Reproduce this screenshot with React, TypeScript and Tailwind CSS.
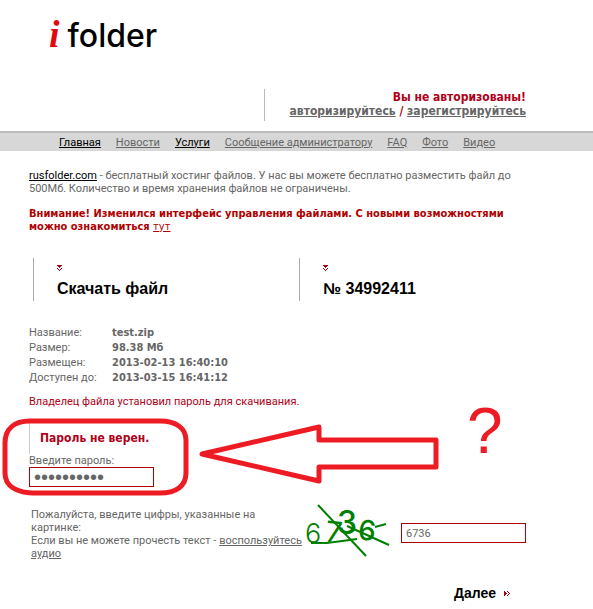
import { ReactNode } from "react";
import clsx from "clsx";

const navItems = [
  { title: "Главная", active: true },
  { title: "Новости" },
  { title: "Услуги", active: true },
  { title: "Сообщение администратору" },
  { title: "FAQ" },
  { title: "Фото" },
  { title: "Видео" },
];

const fileInfo = [
  ["Название:", "test.zip"],
  ["Размер:", "98.38 Мб"],
  ["Размещен:", "2013-02-13 16:40:10"],
  ["Доступен до:", "2013-03-15 16:41:12"],
];

const inputClass =
  "h-5 w-[125px] border border-[#b00000] bg-white px-1 text-[#666666] outline-none";

const boldFont = "font-['DejaVu_Sans_Condensed',sans-serif] font-bold";

function Logo() {
  return (
    <a href="#" aria-label="ifolder" className="flex items-baseline">
      <span className="font-['Liberation_Serif',serif] text-[38px] leading-[44px] font-bold text-[#e00a10] italic">
        i
      </span>
      <span className="ml-2 font-['Inter',sans-serif] text-[32px] leading-[44px] font-medium text-black">
        folder
      </span>
    </a>
  );
}

function DownMark() {
  return (
    <svg width="5" height="6" viewBox="0 0 5 6" fill="#b00018" shapeRendering="crispEdges">
      <path d="M0 0h5v1H0zM1 1h3v1H1zM2 2h1v1H2zM0 3h1v1H0zM4 3h1v1H4zM1 4h1v1H1zM3 4h1v1H3zM2 5h1v1H2z" />
    </svg>
  );
}

function NextMark() {
  return (
    <svg width="6" height="5" viewBox="0 0 6 5" fill="#b00018" shapeRendering="crispEdges">
      <path d="M0 0h1v5H0zM1 1h1v3H1zM2 2h1v1H2zM3 0h1v1H3zM3 4h1v1H3zM4 1h1v1H4zM4 3h1v1H4zM5 2h1v1H5z" />
    </svg>
  );
}

function Heading({ children }: { children: ReactNode }) {
  return (
    <div className="h-[43px] border-l border-[#aaaaaa] pt-[7px] pl-[23px]">
      <DownMark />
      <h2 className="mt-2 font-['Liberation_Sans',sans-serif] text-base leading-5 font-bold text-black">
        {children}
      </h2>
    </div>
  );
}

function Captcha() {
  return (
    <svg width="86" height="54" viewBox="0 0 86 54" overflow="visible" role="img" aria-label="6736">
      <g fill="#008000" fontFamily="Inter, sans-serif">
        <text x="0" y="36" fontSize="27" fontWeight="300">6</text>
        <text x="20" y="36" fontSize="30" fontWeight="400" transform="rotate(6 28 28)">7</text>
        <text x="32" y="27" fontSize="32" fontWeight="500">3</text>
        <text x="53" y="33" fontSize="28" fontWeight="500" transform="rotate(6 61 26)">6</text>
      </g>
      <g stroke="#008000" strokeWidth="2" fill="none">
        <path d="M13 -2L61 49" />
        <path d="M42 19L84 38" />
        <path d="M6 36H22L52 32" />
        <path d="M70 20L81 17" />
      </g>
    </svg>
  );
}

export default function App() {
  return (
    <div className="relative bg-white pb-2 font-['Roboto',sans-serif] text-[11px] leading-[13px] text-[#666666]">
      <header className="pr-[67px] pl-[49px]">
        <div className="h-[89px] pt-3">
          <Logo />
        </div>
        <div className="flex justify-end">
          <div className={clsx(boldFont, "mb-[10px] h-8 w-[262px] border-l border-[#bbbbbb] text-right text-xs leading-[14px] whitespace-nowrap text-[#b00018]")}>
            <p className="pt-px">Вы не авторизованы!</p>
            <p>
              <a href="#" className="text-[#666666] underline">авторизируйтесь</a>
              {" / "}
              <a href="#" className="text-[#666666] underline">зарегистрируйтесь</a>
            </p>
          </div>
        </div>
      </header>

      <nav className="flex h-5 items-center gap-[15px] border-t-2 border-[#bbbbbb] bg-[#d7d7d7] pl-[59px] whitespace-nowrap">
        {navItems.map((item) => (
          <a
            key={item.title}
            href="#"
            className={clsx("underline", item.active && "text-black")}
          >
            {item.title}
          </a>
        ))}
      </nav>

      <main className="pt-[18px] pr-[67px] pl-[29px]">
        <p>
          <a href="#" className="text-black underline">rusfolder.com</a> - бесплатный
          хостинг файлов. У нас вы можете бесплатно разместить файл до 500Мб.
          Количество и время хранения файлов не ограничены.
        </p>
        <p className={clsx(boldFont, "mt-3 text-[#b00000]")}>
          Внимание! Изменился интерфейс управления файлами. С новыми возможностями
          можно ознакомиться{" "}
          <a href="#" className="font-normal underline">тут</a>
        </p>

        <div className="mt-[25px] grid grid-cols-[54%_1fr] pl-1">
          <Heading>Скачать файл</Heading>
          <Heading>№ 34992411</Heading>
        </div>

        <table className="mt-6 text-left leading-[15px]">
          <tbody>
            {fileInfo.map(([label, value]) => (
              <tr key={label}>
                <th className="w-[83px] font-normal">{label}</th>
                <td className={boldFont}>{value}</td>
              </tr>
            ))}
          </tbody>
        </table>
        <p className="mt-[10px] text-[#b00018]">
          Владелец файла установил пароль для скачивания.
        </p>

        <form onSubmit={(e) => e.preventDefault()}>
          <div className="relative mt-[14px]">
            <p className={clsx(boldFont, "h-8 border-l border-[#cccccc] pt-2 pl-[10px] text-xs leading-4 text-[#b00018]")}>
              Пароль не верен.
            </p>
            <label htmlFor="password" className="block">
              Введите пароль:
            </label>
            <input
              id="password"
              type="password"
              defaultValue="1234567890"
              className={clsx(inputClass, "block font-['Liberation_Sans',sans-serif] text-xl")}
            />

            {/* marker notes over the form */}
            <svg
              width="520"
              height="110"
              viewBox="0 -10 520 110"
              className="pointer-events-none absolute top-[-30px] left-[-29px]"
              fill="none"
              stroke="#ed1c24"
              strokeWidth="5"
              strokeLinejoin="round"
            >
              <path d="M30 19H160C177 19 186 27 186 38V71C186 84 176 91 160 91H36C16 91 5 84 5 71V41C5 27 14 19 30 19Z" />
              <path d="M202 52L319 25V38H436V65H319V79Z" />
              <text x="467" y="51" fontSize="64" fill="#ed1c24" stroke="none" fontFamily="Liberation Sans, sans-serif">?</text>
            </svg>
          </div>

          <div className="mt-5 flex items-start pl-[2px]">
            <label htmlFor="digits" className="w-[274px] pt-px">
              Пожалуйста, введите цифры, указанные на картинке:
              <br />
              Если вы не можете прочесть текст -{" "}
              <a href="#" className="underline">воспользуйтесь аудио</a>
            </label>
            <Captcha />
            <input id="digits" type="text" defaultValue="6736" className={clsx(inputClass, "mt-4 ml-auto")} />
          </div>

          <div className="mt-6 flex justify-end pr-4">
            <button type="submit" className="flex items-center gap-2 font-['Liberation_Sans',sans-serif] text-sm leading-4 font-bold text-black">
              Далее
              <NextMark />
            </button>
          </div>
        </form>
      </main>
    </div>
  );
}
